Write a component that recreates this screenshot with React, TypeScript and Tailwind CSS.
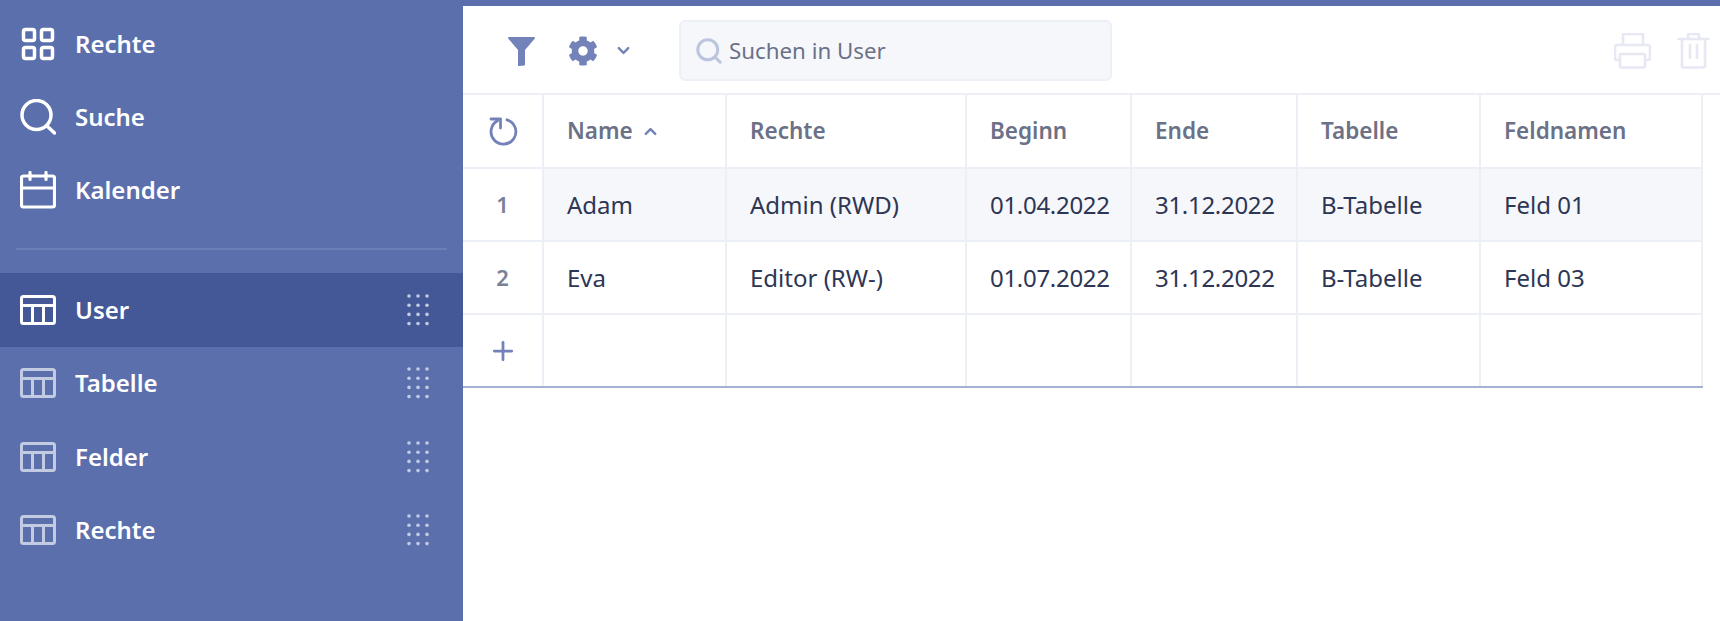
import { ChevronDown, ChevronUp, Plus, Search } from "lucide-react";
import { FaCog } from "react-icons/fa";

const cols = ["w-[183px]", "w-[240px]", "w-[165px]", "w-[166px]", "w-[183px]", "w-[222px]"];
const headers = ["Name", "Rechte", "Beginn", "Ende", "Tabelle", "Feldnamen"];
const rows = [
  ["Adam", "Admin (RWD)", "01.04.2022", "31.12.2022", "B-Tabelle", "Feld 01"],
  ["Eva", "Editor (RW-)", "01.07.2022", "31.12.2022", "B-Tabelle", "Feld 03"],
];
const tables = ["User", "Tabelle", "Felder", "Rechte"];

function GridIcon() {
  return (
    <svg width="36" height="36" viewBox="0 0 36 36" fill="none" stroke="currentColor" strokeWidth="3.5">
      <rect x="3.5" y="3.500" width="11" height="11" rx="2" />
      <rect x="21.500" y="3.500" width="11" height="11" rx="2" />
      <rect x="3.5" y="21.500" width="11" height="11" rx="2" />
      <rect x="21.500" y="21.500" width="11" height="11" rx="2" />
    </svg>
  );
}

function SearchIcon() {
  return (
    <svg width="36" height="36" viewBox="0 0 36 36" fill="none" stroke="currentColor" strokeWidth="3.5" strokeLinecap="round">
      <circle cx="16.5" cy="16" r="14.500" />
      <path d="M27 27l7.500 7" />
    </svg>
  );
}

function CalendarIcon() {
  return (
    <svg width="36" height="38" viewBox="0 0 36 38" fill="none" stroke="currentColor" strokeWidth="3.2" strokeLinecap="round">
      <rect x="1.500" y="5" width="33" height="31" rx="2" />
      <path d="M1.500 17h33M10 1.500v7M26 1.500v7" />
    </svg>
  );
}

function TableIcon() {
  return (
    <svg width="36" height="30" viewBox="0 0 36 30" fill="none" stroke="currentColor" strokeWidth="3">
      <rect x="1.500" y="1.500" width="33" height="27" rx="2" />
      <path d="M1.500 10.500h33M12.500 10.500v18M23.500 10.500v18" />
    </svg>
  );
}

function DotsIcon() {
  const dots = [];
  for (let r = 0; r < 4; r++) {
    for (let c = 0; c < 3; c++) {
      dots.push(<circle key={`${r}-${c}`} cx={2 + c * 9} cy={2 + r * 9.2} r="1.8" />);
    }
  }
  return (
    <svg width="22" height="32" viewBox="0 0 22 32" fill="#c3cbe3">
      {dots}
    </svg>
  );
}

function RefreshIcon() {
  return (
    <svg width="30" height="29" viewBox="7 12 30 29" fill="none" stroke="#7382b8" strokeWidth="2.800" strokeLinecap="round" strokeLinejoin="round">
      <path d="M26 14.800a12.400 12.400 0 1 1-9.500 1" />
      <path d="M10 14h9.500v9" />
    </svg>
  );
}

function PrinterIcon() {
  return (
    <svg width="37" height="36" viewBox="13 14 37 36" fill="none" stroke="#e6e8f4" strokeWidth="2.600" strokeLinejoin="round">
      <path d="M22 26v-11h20v11" />
      <path d="M19 41h-3a2 2 0 0 1-2-2v-11a2 2 0 0 1 2-2h31a2 2 0 0 1 2 2v11a2 2 0 0 1-2 2h-3" />
      <rect x="19" y="35" width="25" height="13.500" rx="1.500" />
    </svg>
  );
}

function TrashIcon() {
  return (
    <svg width="33" height="36" viewBox="77 13 33 36" fill="none" stroke="#e6e8f4" strokeWidth="2.600" strokeLinejoin="round" strokeLinecap="round">
      <path d="M78.500 19h30" />
      <path d="M88 19v-4a1 1 0 0 1 1-1h9a1 1 0 0 1 1 1v4" />
      <path d="M82 19v27a1.500 1.500 0 0 0 1.500 1.500h20a1.500 1.500 0 0 0 1.500-1.500v-27" />
      <path d="M90 25v13M97 25v13" />
    </svg>
  );
}

function NavItem({ icon, label }: { icon: React.ReactNode; label: string }) {
  return (
    <div className="flex h-[73px] items-center">
      <span className="flex w-[75px] justify-center text-white">{icon}</span>
      <span className="text-[24px] font-semibold text-white">{label}</span>
    </div>
  );
}

function Sidebar() {
  return (
    <aside className="w-[463px] shrink-0 pt-[7px]">
      <NavItem icon={<GridIcon />} label="Rechte" />
      <NavItem icon={<SearchIcon />} label="Suche" />
      <NavItem icon={<CalendarIcon />} label="Kalender" />
      <div className="mx-4 mt-[22px] mb-[23px] h-[2px] bg-[#6b7eb8]" />
      {tables.map((name, index) => (
        <div key={name} className={`flex h-[73.5px] items-center pr-[34px] ${index === 0 ? "bg-[#445796]" : ""}`}>
          <span className={`flex w-[75px] justify-center ${index === 0 ? "text-white" : "text-[#c3cbe3]"}`}>
            <TableIcon />
          </span>
          <span className="flex-1 text-[24px] font-semibold text-white">{name}</span>
          <DotsIcon />
        </div>
      ))}
    </aside>
  );
}

function Toolbar() {
  return (
    <div className="flex h-[89px] items-center border-b-2 border-[#edeff7] pt-[2px]">
      <svg className="ml-[45px]" width="27" height="30" viewBox="0 0 27 30" fill="#7382b8">
        <path d="M1 1h25a1 1 0 0 1 .8 1.600L17 14v14.500a1 1 0 0 1-.6 1l-5 .4a1 1 0 0 1-1.400-1V14L.2 2.600A1 1 0 0 1 1 1z" />
      </svg>
      <FaCog className="ml-[33px] text-[#7382b8]" size={30} />
      <ChevronDown className="ml-[16px] text-[#7382b8]" size={19} strokeWidth={3} />
      <div className="ml-[46px] flex h-[61px] w-[433px] items-center rounded-md border-2 border-[#eef0f7] bg-[#f6f7fb] pl-[13px]">
        <Search className="text-[#bcc5de]" size={30} strokeWidth={2.400} />
        <span className="ml-[5px] text-[22.300px] text-[#6b7186]">Suchen in User</span>
      </div>
      <div className="flex-1" />
      <PrinterIcon />
      <div className="w-[26px]" />
      <TrashIcon />
      <div className="w-[10px]" />
    </div>
  );
}

function Table() {
  return (
    <div className="w-[1240px] text-[24px]">
      <div className="flex h-[74px] border-b-2 border-[#edeff7] text-[22.500px]">
        <div className="flex w-[81px] items-center justify-center border-r-2 border-[#edeff7]">
          <RefreshIcon />
        </div>
        {headers.map((h, i) => (
          <div key={h} className={`flex items-center border-r-2 border-[#edeff7] pl-[23px] font-semibold text-[#6b7186] ${cols[i]}`}>
            {h}
            {i === 0 && <ChevronUp className="ml-[8px] text-[#7382b8]" size={19} strokeWidth={3} />}
          </div>
        ))}
      </div>
      {rows.map((row, r) => (
        <div key={row[0]} className="flex h-[73px] border-b-2 border-[#edeff7]">
          <div className="flex w-[81px] items-center justify-center border-r-2 border-[#edeff7] text-[22px] font-semibold text-[#7a8098]">{r + 1}</div>
          {row.map((cell, i) => (
            <div
              key={i}
              className={`flex items-center border-r-2 border-[#edeff7] pl-[23px] text-[#2d3654] ${cols[i]} ${r === 0 ? "bg-[#f6f7fb]" : ""} ${i === 2 || i === 3 ? "tracking-[-0.3px]" : ""}`}
            >
              {cell}
            </div>
          ))}
        </div>
      ))}
      <div className="flex h-[73px] border-b-2 border-[#a6b0d3]">
        <div className="flex w-[81px] items-center justify-center border-r-2 border-[#edeff7]">
          <Plus className="text-[#7382b8]" size={30} strokeWidth={2.200} />
        </div>
        {cols.map((c) => (
          <div key={c} className={`border-r-2 border-[#edeff7] ${c}`} />
        ))}
      </div>
    </div>
  );
}

export default function App() {
  return (
    <div className="flex h-[621px] w-[1720px] overflow-hidden bg-[#5b6fad] font-['Noto_Sans',sans-serif]">
      <Sidebar />
      <main className="mt-[6px] flex-1 bg-white">
        <Toolbar />
        <Table />
      </main>
    </div>
  );
}
